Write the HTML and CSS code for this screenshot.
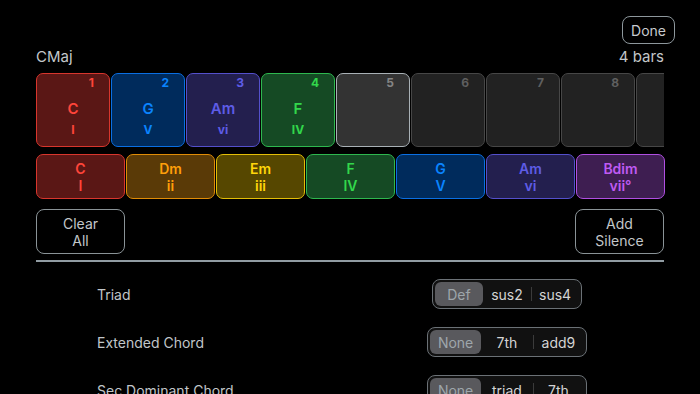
FILE: index.html
```html
<!DOCTYPE html>
<html lang="en">
<head>
<meta charset="utf-8">
<title>Chord Progression</title>
<link rel="stylesheet" href="styles.css">
</head>
<body>
<div class="top">
  <button class="done">Done</button>
</div>
<main class="panel">
  <div class="head">
    <span>CMaj</span>
    <span>4 bars</span>
  </div>

  <div class="bars">
    <div class="bar red"><span class="num">1</span><span class="name">C</span><span class="rn">I</span></div>
    <div class="bar blue"><span class="num">2</span><span class="name">G</span><span class="rn">V</span></div>
    <div class="bar indigo"><span class="num">3</span><span class="name">Am</span><span class="rn">vi</span></div>
    <div class="bar green"><span class="num">4</span><span class="name">F</span><span class="rn">IV</span></div>
    <div class="bar empty current"><span class="num">5</span></div>
    <div class="bar empty"><span class="num">6</span></div>
    <div class="bar empty"><span class="num">7</span></div>
    <div class="bar empty"><span class="num">8</span></div>
    <div class="bar empty"></div>
  </div>

  <div class="palette">
    <div class="chord red"><span>C</span><span>I</span></div>
    <div class="chord orange"><span>Dm</span><span>ii</span></div>
    <div class="chord yellow"><span>Em</span><span>iii</span></div>
    <div class="chord green"><span>F</span><span>IV</span></div>
    <div class="chord blue"><span>G</span><span>V</span></div>
    <div class="chord indigo"><span>Am</span><span>vi</span></div>
    <div class="chord purple"><span>Bdim</span><span>vii°</span></div>
  </div>

  <div class="actions">
    <button class="action">Clear<br>All</button>
    <button class="action">Add<br>Silence</button>
  </div>

  <div class="sep"></div>

  <div class="settings">
    <div class="row">
      <span class="label">Triad</span>
      <div class="seg-wrap">
        <div class="seg">
          <span class="opt sel">Def</span>
          <span class="opt">sus2</span>
          <span class="opt div">sus4</span>
        </div>
      </div>
    </div>
    <div class="row">
      <span class="label">Extended Chord</span>
      <div class="seg-wrap">
        <div class="seg">
          <span class="opt sel">None</span>
          <span class="opt">7th</span>
          <span class="opt div">add9</span>
        </div>
      </div>
    </div>
    <div class="row">
      <span class="label">Sec Dominant Chord</span>
      <div class="seg-wrap">
        <div class="seg">
          <span class="opt sel">None</span>
          <span class="opt">triad</span>
          <span class="opt div">7th</span>
        </div>
      </div>
    </div>
  </div>
</main>
</body>
</html>
```

FILE: styles.css
```css
* { box-sizing: border-box; }

html, body {
  margin: 0;
  background: #000;
  height: 394px;
  overflow: hidden;
}

body {
  font-family: "Inter", "Noto Sans", sans-serif;
  color: #c7cbce;
  width: 700px;
}

button {
  font-family: inherit;
  background: #000;
  cursor: pointer;
}

.top {
  display: flex;
  justify-content: flex-end;
  padding: 16px 25px 0 0;
}

.done {
  height: 28px;
  width: 53px;
  border: 1px solid #8d979c;
  border-radius: 8px;
  color: #c7cbce;
  font-size: 14px;
  padding: 0;
}

.panel {
  padding: 0 36px;
}

.head {
  display: flex;
  justify-content: space-between;
  font-size: 15px;
  line-height: 18px;
  margin-top: 4px;
  color: #c3c7ca;
}

.bars {
  display: flex;
  gap: 1px;
  margin-top: 7px;
  overflow: hidden;
}

.bar {
  flex: 0 0 74px;
  height: 74px;
  border: 1.5px solid;
  border-radius: 7px;
  display: flex;
  flex-direction: column;
  align-items: center;
  padding-top: 2px;
  font-weight: 700;
}

.bar .num {
  align-self: flex-end;
  margin-right: 15px;
  font-size: 12px;
  line-height: 14px;
}

.bar .name {
  font-size: 15px;
  font-weight: 600;
  line-height: 18px;
  margin-top: 10px;
}

.bar .rn {
  font-size: 12px;
  line-height: 14px;
  margin-top: 5px;
}

.bar.empty {
  background: #222;
  border-color: #474747;
  color: #5f5f5f;
}

.bar.current {
  background: #333;
  border-color: #a9b1b6;
  color: #858585;
}

.palette {
  display: flex;
  gap: 1px;
  margin-top: 7px;
}

.chord {
  flex: 0 0 89px;
  height: 45px;
  border: 1.5px solid;
  border-radius: 7px;
  display: flex;
  flex-direction: column;
  align-items: center;
  justify-content: center;
  font-size: 14px;
  font-weight: 600;
  line-height: 17px;
}

.red    { background: #5a1715; border-color: #d8362d; color: #ff453a; }
.orange { background: #5a3a07; border-color: #e08c06; color: #ff9f0a; }
.yellow { background: #564700; border-color: #e3be07; color: #ffd60a; }
.green  { background: #154a24; border-color: #2eb84f; color: #32d74b; }
.blue   { background: #002b5c; border-color: #0a6fe3; color: #0a84ff; }
.indigo { background: #231f4e; border-color: #5450cc; color: #5e5ce6; }
.purple { background: #3e1e51; border-color: #b04fe2; color: #bf5af2; }

.actions {
  display: flex;
  justify-content: space-between;
  margin-top: 10px;
}

.action {
  width: 89px;
  height: 45px;
  border: 1px solid #8a9397;
  border-radius: 8px;
  color: #c3c7ca;
  font-size: 14px;
  line-height: 17px;
  padding: 0;
}

.sep {
  height: 2px;
  background: #919ca3;
  margin-top: 6px;
}

.settings {
  margin-top: 8px;
}

.row {
  display: grid;
  grid-template-columns: 1fr 1fr;
  align-items: center;
  height: 48px;
}

.label {
  padding-left: 61px;
  font-size: 14px;
  color: #c1c6c9;
}

.seg-wrap {
  display: flex;
  justify-content: center;
}

.seg {
  display: inline-grid;
  grid-auto-flow: column;
  grid-auto-columns: 1fr;
  height: 30px;
  padding: 2px;
  border: 1px solid #6b7176;
  border-radius: 8px;
  background: #111;
}

.opt {
  position: relative;
  display: flex;
  align-items: center;
  justify-content: center;
  padding: 0 8px;
  font-size: 14px;
  color: #d4d4d4;
  border-radius: 6px;
}

.opt.sel {
  background: #59595d;
  color: #9ea6ab;
}

.opt.div::before {
  content: "";
  position: absolute;
  left: 0;
  top: 5px;
  bottom: 5px;
  width: 1px;
  background: #3b3b3b;
}
```
